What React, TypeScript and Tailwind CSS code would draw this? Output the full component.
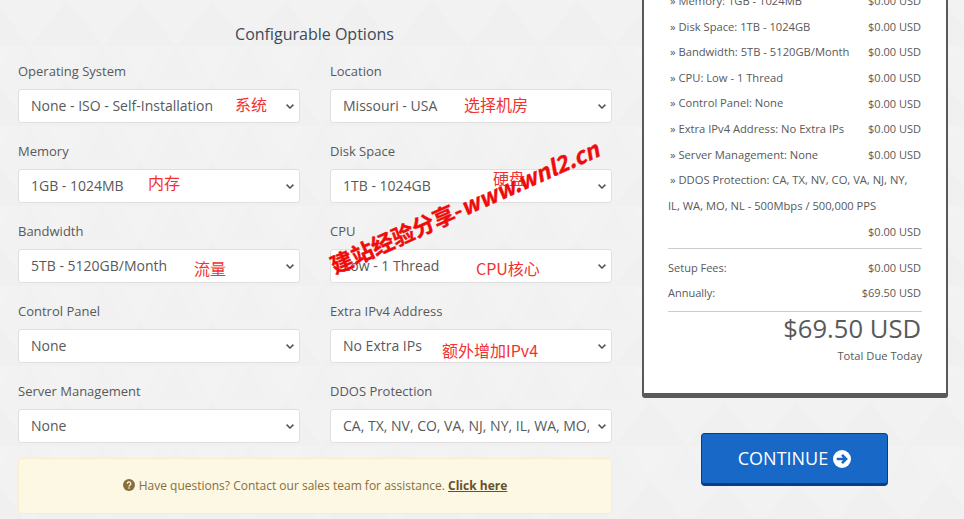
const fields = [
  { label: "Operating System", value: "None - ISO - Self-Installation", note: "系统", noteClass: "left-[217px] top-[3px]" },
  { label: "Location", value: "Missouri - USA", note: "选择机房", noteClass: "left-[134px] top-[3px]" },
  { label: "Memory", value: "1GB - 1024MB", note: "内存", noteClass: "left-[130px] top-[1px]" },
  { label: "Disk Space", value: "1TB - 1024GB", note: "硬盘", noteClass: "left-[163px] top-[-3px]" },
  { label: "Bandwidth", value: "5TB - 5120GB/Month", note: "流量", noteClass: "left-[176px] top-[7px]" },
  { label: "CPU", value: "Low - 1 Thread", note: "CPU核心", noteClass: "left-[146px] top-[7px]" },
  { label: "Control Panel", value: "None" },
  { label: "Extra IPv4 Address", value: "No Extra IPs", note: "额外增加IPv4", noteClass: "left-[112px] top-[9px]" },
  { label: "Server Management", value: "None" },
  { label: "DDOS Protection", value: "CA, TX, NV, CO, VA, NJ, NY, IL, WA, MO, NL - 500Mbps / 500,000 PPS" },
];

const lines = [
  "Memory: 1GB - 1024MB",
  "Disk Space: 1TB - 1024GB",
  "Bandwidth: 5TB - 5120GB/Month",
  "CPU: Low - 1 Thread",
  "Control Panel: None",
  "Extra IPv4 Address: No Extra IPs",
  "Server Management: None",
];

function Field({ label, value, note, noteClass }: { label: string; value: string; note?: string; noteClass?: string }) {
  return (
    <div className="h-[80px]">
      <label className="mb-[8px] block h-[20px] text-[13px] leading-[20px]">{label}</label>
      <div className="relative">
        <select defaultValue={value} className="h-[34px] w-full appearance-none rounded-[3px] border border-[#dfdfdf] bg-white pb-[2px] pl-[12px] pr-[22px] text-[14px] text-[#58595b]">
          <option>{value}</option>
        </select>
        <svg viewBox="0 0 8 5" className="pointer-events-none absolute right-[6px] top-[15px] h-[5px] w-[8px]">
          <path d="M.6.6 4 4l3.4-3.4" fill="none" stroke="#555" strokeWidth="1.5" />
        </svg>
        {note && (
          <span className={`absolute font-['Noto_Sans_CJK_SC',sans-serif] text-[16px] leading-[24px] text-[#f33131] ${noteClass}`}>{note}</span>
        )}
      </div>
    </div>
  );
}

function Background() {
  return (
    <svg className="absolute inset-0 h-full w-full">
      <defs>
        <pattern id="tri" width="73" height="80" patternUnits="userSpaceOnUse" patternTransform="translate(30 0)">
          <polygon points="0,46 36.5,0 73,46" fill="#f0f0f0" />
          <polygon points="-18,80 0,46 18,80" fill="#f1f1f1" />
          <polygon points="55,80 73,46 91,80" fill="#f1f1f1" />
          <polygon points="18,46 36.5,80 55,46" fill="#f3f3f3" />
        </pattern>
      </defs>
      <rect width="100%" height="100%" fill="#f2f2f2" />
      <rect width="100%" height="100%" fill="url(#tri)" />
    </svg>
  );
}

export default function App() {
  return (
    <div className="relative h-[519px] overflow-hidden font-['Open_Sans',sans-serif] text-[#58595b]">
      <Background />
      <div className="relative flex gap-[30px] pl-[18px]">
        <div className="w-[594px] shrink-0">
          <h2 className="h-[61px] pr-[1px] pt-[22px] text-center text-[16px] leading-[24px] text-[#3c4a58]">Configurable Options</h2>
          <div className="grid grid-cols-2 gap-x-[30px]">
            {fields.map((f) => (
              <Field key={f.label} {...f} />
            ))}
          </div>
          <div className="mt-[-3px] flex h-[56px] items-center justify-center rounded-[4px] border border-[#faebcc] bg-[#fcf8e3] text-[12px] text-[#8a6d3b]">
            <span>
              <svg viewBox="0 0 24 24" className="mr-[4px] inline-block h-[12px] w-[12px] align-[-1px]">
                <circle cx="12" cy="12" r="12" fill="#8a6d3b" />
                <path d="M8.5 9.5a3.5 3.5 0 1 1 5.2 3c-1.2.7-1.7 1.2-1.7 2.5" fill="none" stroke="#fcf8e3" strokeWidth="2.6" />
                <rect x="10.6" y="16.6" width="2.8" height="2.8" fill="#fcf8e3" />
              </svg>
              Have questions? Contact our sales team for assistance.{" "}
              <a className="font-bold text-[#66512c] underline">Click here</a>
            </span>
          </div>
        </div>

        <div className="w-[306px] shrink-0">
          <div className="mt-[-11.4px] h-[409.4px] rounded-[3px] border-x-2 border-b-[5px] border-[#58595b] bg-white px-[24px] text-[11px]">
            {lines.map((l) => (
              <div key={l} className="flex h-[25.6px] items-center justify-between pr-[1px]">
                <span className="pl-[2px] text-[11.2px]">» {l}</span>
                <span>$0.00 USD</span>
              </div>
            ))}
            <div className="mt-[-0.4px] pr-[1px] leading-[25.6px]">
              <span className="pl-[2px] text-[11.2px]">» DDOS Protection: CA, TX, NV, CO, VA, NJ, NY,<br />IL, WA, MO, NL - 500Mbps / 500,000 PPS</span>
              <div className="text-right">$0.00 USD</div>
            </div>
            <div className="mb-[7px] mt-[4px] border-t border-[#cccccc]" />
            <div className="flex h-[25px] items-center justify-between pr-[1px]"><span>Setup Fees:</span><span>$0.00 USD</span></div>
            <div className="flex h-[25px] items-center justify-between pr-[1px]"><span>Annually:</span><span>$69.50 USD</span></div>
            <div className="mt-[5px] border-t border-[#cccccc] text-right">
              <div className="pr-[1px] text-[25.6px] leading-[34px]">$69.50 USD</div>
              <div className="text-[11.2px] leading-[20px]">Total Due Today</div>
            </div>
          </div>
          <button className="ml-[59px] mt-[35px] flex h-[53px] w-[187px] items-center justify-center gap-[5px] rounded-[4px] border border-b-[3px] border-[#0f3a8a] bg-[#1868c8] text-[18px] text-white">
            CONTINUE
            <svg viewBox="0 0 24 24" className="h-[18px] w-[18px]">
              <circle cx="12" cy="12" r="12" fill="#fff" />
              <path d="M5 12h12M12 6.5l5.5 5.5-5.5 5.5" fill="none" stroke="#1868c8" strokeWidth="3.4" />
            </svg>
          </button>
        </div>
      </div>

      <div className="absolute left-[331px] top-[250px] origin-left rotate-[-24deg] whitespace-nowrap font-['Noto_Sans_CJK_SC',sans-serif] text-[22.3px] font-bold leading-[30px] text-[#f00a0a] [-webkit-text-stroke:0.4px_#f00a0a]">
        建站经验分享-<span className="italic">www.wnl2.cn</span>
      </div>
    </div>
  );
}
